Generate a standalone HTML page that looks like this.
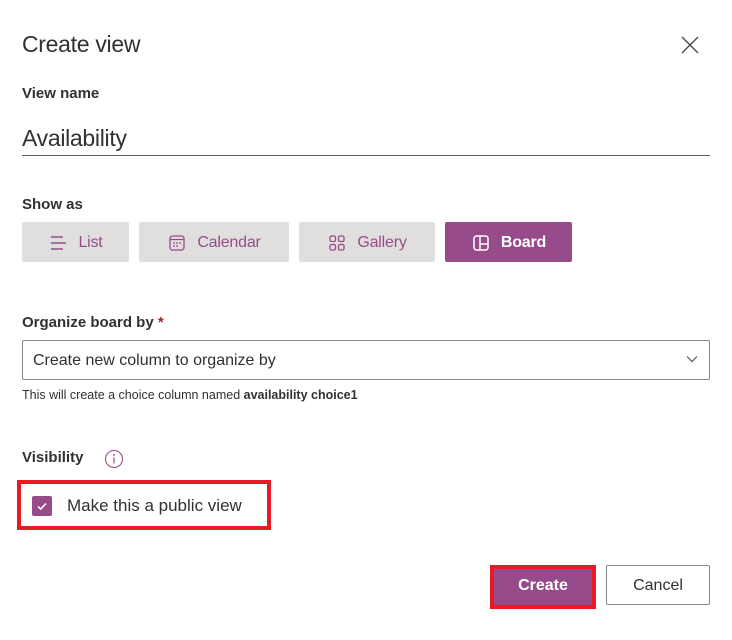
<!DOCTYPE html>
<html><head><meta charset="utf-8"><style>
*{box-sizing:border-box;margin:0;padding:0}
body{width:732px;height:640px;background:#fff;font-family:"Liberation Sans",sans-serif;color:#323130;position:relative;overflow:hidden}
.a{position:absolute;white-space:nowrap}
.btn{position:absolute;top:222px;height:40px;padding-top:2px;background:#e1dfdd;border-radius:2px;color:#974b8a;font-size:16px;display:flex;align-items:center;justify-content:center;gap:10px;letter-spacing:-0.2px}
.btn svg{width:20px;height:20px}
</style></head><body>
<div class="a" style="left:22px;top:31px;font-size:23px;letter-spacing:-0.3px">Create view</div>
<svg class="a" style="left:681px;top:36px" width="18" height="18" viewBox="0 0 18 18"><path d="M1 1L17 17M17 1L1 17" stroke="#444" stroke-width="1.3"/></svg>
<div class="a" style="left:22px;top:85px;font-size:15px;font-weight:bold;color:#323130">View name</div>
<div class="a" style="left:22px;top:125px;font-size:23px;color:#323130;letter-spacing:-0.3px">Availability</div>
<div class="a" style="left:22px;top:155px;width:688px;height:1px;background:#605e5c"></div>
<div class="a" style="left:22px;top:196px;font-size:15px;font-weight:bold">Show as</div>
<div class="btn" style="left:22px;width:107px"><svg viewBox="0 0 20 20"><path d="M3 4h12M3 10h15M3 16h12" stroke="#974b8a" stroke-width="1.4"/></svg>List</div>
<div class="btn" style="left:139px;width:150px"><svg viewBox="0 0 20 20"><rect x="3" y="3" width="14" height="14" rx="2.5" fill="none" stroke="#974b8a" stroke-width="1.3"/><path d="M3 6.5h14" stroke="#974b8a" stroke-width="1.2"/><g fill="#974b8a"><circle cx="7" cy="10" r=".9"/><circle cx="10" cy="10" r=".9"/><circle cx="13" cy="10" r=".9"/><circle cx="7" cy="13" r=".9"/><circle cx="10" cy="13" r=".9"/></g></svg>Calendar</div>
<div class="btn" style="left:299px;width:136px"><svg viewBox="0 0 20 20"><g fill="none" stroke="#974b8a" stroke-width="1.3"><rect x="3" y="3" width="5.5" height="5.5" rx="1.5"/><rect x="11.5" y="3" width="5.5" height="5.5" rx="1.5"/><rect x="3" y="11.5" width="5.5" height="5.5" rx="1.5"/><rect x="11.5" y="11.5" width="5.5" height="5.5" rx="1.5"/></g></svg>Gallery</div>
<div class="btn" style="left:445px;width:127px;background:#974b8a;color:#fff;font-weight:bold"><svg viewBox="0 0 20 20"><g fill="none" stroke="#fff" stroke-width="1.5"><rect x="3" y="3" width="14" height="14" rx="2.5"/><path d="M9 3v14M9 11h8"/></g></svg>Board</div>
<div class="a" style="left:22px;top:314px;font-size:15px;font-weight:bold">Organize board by <span style="color:#a4262c">*</span></div>
<div class="a" style="left:22px;top:340px;width:688px;height:40px;border:1px solid #8a8886;border-radius:2px"></div>
<div class="a" style="left:33px;top:352px;font-size:16px">Create new column to organize by</div>
<svg class="a" style="left:686px;top:355px" width="12" height="8" viewBox="0 0 12 8"><path d="M1 1.5l5 5 5-5" fill="none" stroke="#555" stroke-width="1.2"/></svg>
<div class="a" style="left:22px;top:388px;font-size:12.5px">This will create a choice column named <b>availability choice1</b></div>
<div class="a" style="left:22px;top:449px;font-size:15px;font-weight:bold">Visibility</div>
<svg class="a" style="left:104px;top:449px" width="20" height="20" viewBox="0 0 20 20"><circle cx="10" cy="10" r="8.5" fill="none" stroke="#974b8a" stroke-width="1.1"/><path d="M10 8.5v6" stroke="#974b8a" stroke-width="1.2"/><circle cx="10" cy="6" r=".9" fill="#974b8a"/></svg>
<div class="a" style="left:17px;top:480px;width:254px;height:50px;border:4px solid #e81a24"></div>
<div class="a" style="left:32px;top:496px;width:20px;height:20px;background:#974b8a;border-radius:2px"></div>
<svg class="a" style="left:32px;top:496px" width="20" height="20" viewBox="0 0 20 20"><path d="M6 10.5l2.7 2.5 5.3-5.5" fill="none" stroke="#fff" stroke-width="1.6"/></svg>
<div class="a" style="left:67px;top:496px;font-size:17px">Make this a public view</div>
<div class="a" style="left:490px;top:565px;width:106px;height:44px;border:4px solid #e81a24;background:#974b8a"></div>
<div class="a" style="left:494px;top:577px;width:98px;text-align:center;font-size:16px;font-weight:bold;color:#fff">Create</div>
<div class="a" style="left:606px;top:565px;width:104px;height:40px;border:1px solid #8a8886;border-radius:2px"></div>
<div class="a" style="left:606px;top:577px;width:104px;text-align:center;font-size:16px">Cancel</div>
</body></html>
